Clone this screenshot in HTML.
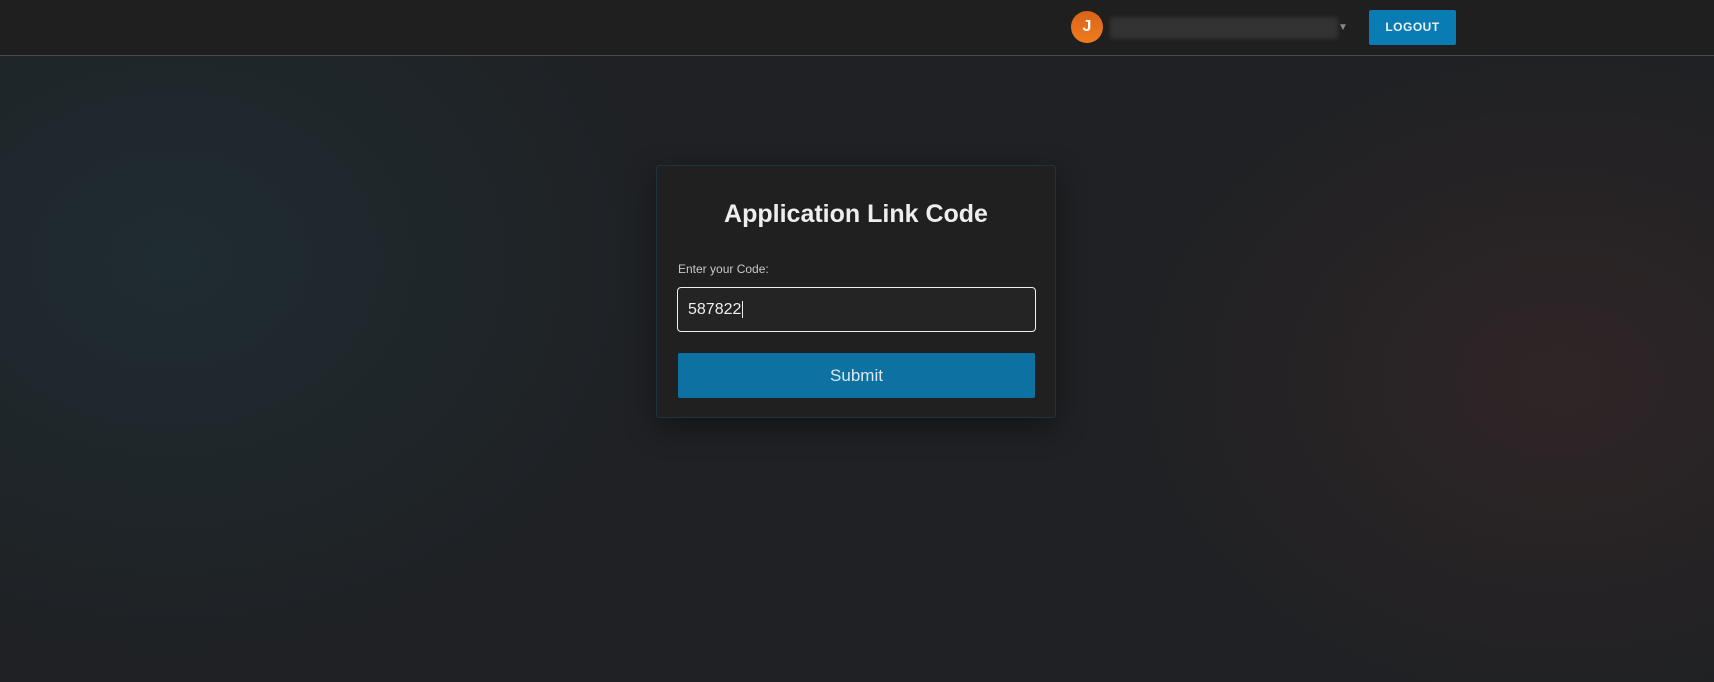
<!DOCTYPE html>
<html><head><style>
body{margin:0;width:1714px;height:682px;overflow:hidden;font-family:"Liberation Sans",sans-serif;
background:radial-gradient(ellipse 500px 400px at 170px 260px,#1f2c31 0%,rgba(31,44,49,0) 100%),radial-gradient(ellipse 450px 350px at 1560px 380px,#2f2526 0%,rgba(47,37,38,0) 100%),#1f2124;position:relative}
.hdr{position:absolute;left:0;top:0;width:1714px;height:55px;background:#1f1f1f;border-bottom:1px solid #4a4a4a}
.av{position:absolute;left:1071px;top:11px;width:32px;height:32px;border-radius:50%;background:linear-gradient(#d8631a,#f07c1c);color:#fff;font-weight:bold;font-size:16px;text-align:center;line-height:32px}
.blur{position:absolute;left:1110px;top:17px;width:228px;height:22px;background:#333;filter:blur(2px);border-radius:3px}
.arr{position:absolute;left:1338px;top:22px;color:#888;font-size:10px}
.lo{position:absolute;left:1369px;top:10px;width:87px;height:35px;background:#0a7cb4;border-radius:2px;color:#e8f0f4;font-weight:bold;font-size:12px;letter-spacing:.5px;text-align:center;line-height:35px}
.card{position:absolute;left:656px;top:165px;width:398px;height:251px;background:#202020;border:1px solid #1d3440;border-radius:3px;box-shadow:0 10px 30px rgba(0,0,0,.4)}
h1{margin:0;position:absolute;top:34px;width:100%;text-align:center;color:#eee;font-size:25px;font-weight:bold}
.lbl{position:absolute;left:21px;top:96px;color:#c8c8c8;font-size:12px}
.inp{position:absolute;left:20px;top:121px;width:359px;height:45px;border:1.5px solid #eee;border-radius:4px;background:#242424;color:#eee;font-size:16px;line-height:43px;box-sizing:border-box;padding-left:10px}
.btn{position:absolute;left:21px;top:187px;width:357px;height:45px;background:#0d71a1;border-radius:2px;color:#dde8ee;font-size:17px;text-align:center;line-height:45px}
</style></head><body>
<div class="hdr"><div class="av">J</div><div class="blur"></div><div class="arr">▼</div><div class="lo">LOGOUT</div></div>
<div class="card"><h1>Application Link Code</h1><div class="lbl">Enter your Code:</div>
<div class="inp">587822<span style="border-left:1px solid #eee;margin-left:1px"></span></div>
<div class="btn">Submit</div></div>
</body></html>
